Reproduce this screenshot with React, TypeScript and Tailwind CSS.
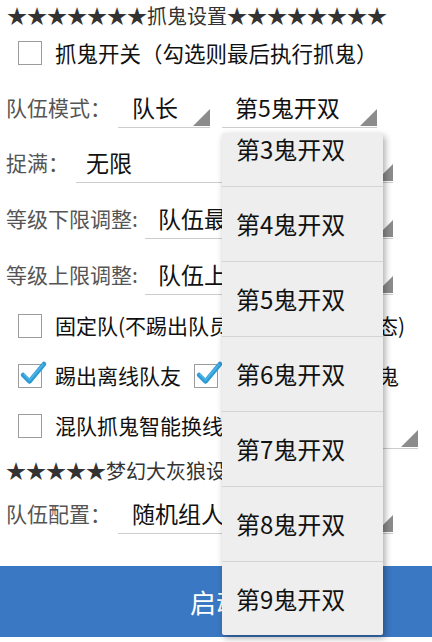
import React from 'react';

const FONT = '"Noto Sans CJK SC", "Noto Sans", sans-serif';

const Arrow: React.FC = () => (
  <svg width={17} height={17} viewBox="0 0 17 17" className="shrink-0 self-end mb-[1px]">
    <polygon points="17,0 17,17 0,17" fill="#8c8c8c" />
  </svg>
);

const Spinner: React.FC<{ value?: string; className?: string; padLeft?: string }> = ({ value, className = '', padLeft = 'pl-[14px]' }) => (
  <div className={`h-[41px] flex border-b border-[#cdcdcd] ${className}`}>
    <span className={`flex-1 flex items-center ${padLeft} text-[23px] text-[#111] whitespace-nowrap overflow-hidden`}>{value}</span>
    <Arrow />
  </div>
);

const Check: React.FC<{ checked?: boolean }> = ({ checked }) => (
  <div className="relative w-[24px] h-[24px] shrink-0 border-[1.5px] border-[#9c9c9c] bg-white">
    {checked && (
      <svg width={30} height={30} viewBox="0 0 30 30" className="absolute left-[0px] top-[-6px] overflow-visible">
        <path d="M4 16 L10.5 22.5 L25 5" fill="none" stroke="#2f9bd6" strokeWidth={4.5} strokeLinecap="round" strokeLinejoin="round" />
        <path d="M5 15.5 L10.5 21 L24 5.5" fill="none" stroke="#5cc0ee" strokeWidth={1.5} strokeLinecap="round" strokeLinejoin="round" opacity={0.7} />
      </svg>
    )}
  </div>
);

const Label: React.FC<{ text: string; w: string }> = ({ text, w }) => (
  <span className={`${w} shrink-0 pl-[6px] flex items-center text-[21px] text-[#555] whitespace-nowrap`}>{text}</span>
);

const items = ['第3鬼开双', '第4鬼开双', '第5鬼开双', '第6鬼开双', '第7鬼开双', '第8鬼开双', '第9鬼开双'];

export default function App() {
  return (
    <div className="relative w-[432px] h-[642px] bg-white overflow-hidden" style={{ fontFamily: FONT }}>
      {/* title */}
      <div className="h-[32px] flex items-center pl-[7px] text-[20px] text-[#333] whitespace-nowrap">★★★★★★★抓鬼设置★★★★★★★★</div>

      <div className="h-[42px] flex items-center pl-[18px] gap-[13px]">
        <Check />
        <span className="text-[21.5px] text-[#111] whitespace-nowrap">抓鬼开关（勾选则最后执行抓鬼）</span>
      </div>

      <div className="mt-[13px] flex">
        <Label text="队伍模式：" w="w-[118px]" />
        <Spinner value="队长" className="w-[92px]" />
        <Spinner value="第5鬼开双" className="w-[155px] ml-[12px]" padLeft="pl-[13px]" />
      </div>

      <div className="mt-[14px] flex">
        <Label text="捉满：" w="w-[76px]" />
        <Spinner value="无限" className="w-[317px]" padLeft="pl-[10px]" />
      </div>

      <div className="mt-[15px] flex">
        <Label text="等级下限调整:" w="w-[145px]" />
        <Spinner value="队伍最低" className="w-[248px]" padLeft="pl-[13px]" />
      </div>

      <div className="mt-[15px] flex">
        <Label text="等级上限调整:" w="w-[145px]" />
        <Spinner value="队伍上限" className="w-[248px]" padLeft="pl-[13px]" />
      </div>

      <div className="mt-[6px] h-[50px] flex items-center pl-[18px] gap-[13px]">
        <Check />
        <span className="text-[21px] text-[#111] whitespace-nowrap">固定队(不踢出队员，保持队伍的状态)</span>
      </div>

      <div className="h-[50px] flex items-center pl-[18px]">
        <Check checked />
        <span className="ml-[13px] text-[21px] text-[#111] whitespace-nowrap">踢出离线队友</span>
        <div className="ml-[13px]"><Check checked /></div>
        <span className="ml-[13px] text-[21px] text-[#111] whitespace-nowrap">队长离线自动抓鬼</span>
      </div>

      <div className="h-[50px] flex items-center pl-[18px]">
        <Check />
        <span className="ml-[13px] text-[21px] text-[#111] whitespace-nowrap">混队抓鬼智能换线</span>
        <div className="ml-auto mr-[14px] self-end mb-[2px] w-[100px] h-[34px] flex border-b border-[#cdcdcd]">
          <span className="flex-1" />
          <Arrow />
        </div>
      </div>

      <div className="h-[40px] flex items-center pl-[6px] text-[20px] text-[#333] whitespace-nowrap">★★★★★梦幻大灰狼设置</div>

      <div className="mt-[2px] flex">
        <Label text="队伍配置：" w="w-[118px]" />
        <Spinner value="随机组人" className="w-[275px]" />
      </div>

      <button className="mt-[32px] w-full h-[71px] bg-[#3b78c3] flex items-center justify-center text-[26px] text-white">启动</button>

      {/* dropdown popup */}
      <div className="absolute left-[222px] top-[133px] w-[161px] h-[502px] bg-[#eeeeee] overflow-hidden rounded-[2px] shadow-[2px_3px_7px_rgba(0,0,0,0.35)]">
        <div className="-mt-[22px]">
          {items.map((t, i) => (
            <div
              key={t}
              className={`h-[75px] flex items-center pl-[14px] text-[24px] text-[#111] whitespace-nowrap ${i > 0 ? 'border-t border-[#d4d4d4]' : ''}`}
            >
              {t}
            </div>
          ))}
        </div>
      </div>
    </div>
  );
}
